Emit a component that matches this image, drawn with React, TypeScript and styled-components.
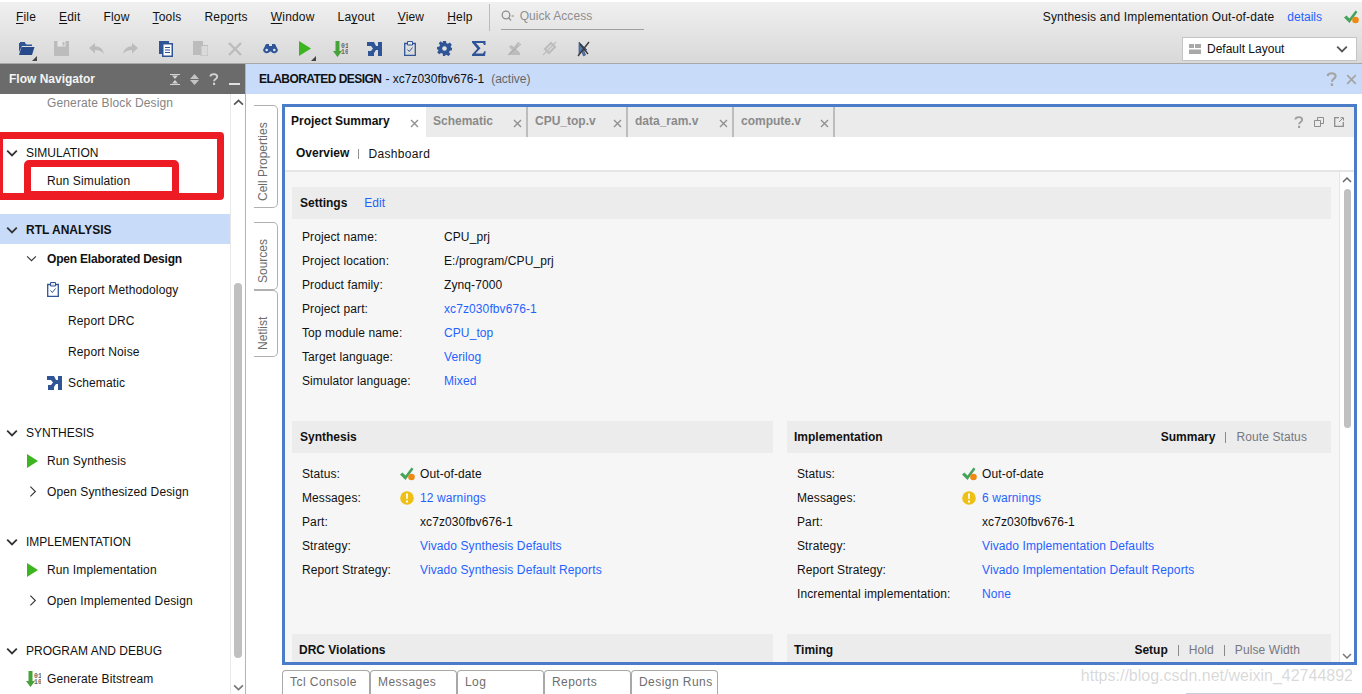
import { ReactNode } from "react";
import styled, { createGlobalStyle } from "styled-components";

const GlobalStyle = createGlobalStyle`
  html, body {
    margin: 0;
    padding: 0;
    background: #ffffff;
    overflow: hidden;
  }
  body {
    font-family: "Liberation Sans", Arial, sans-serif;
    font-size: 12px;
    color: #111111;
  }
  * {
    box-sizing: border-box;
  }
`;

const Page = styled.div`
  position: relative;
  width: 1362px;
  height: 694px;
  overflow: hidden;
  display: flex;
  flex-direction: column;
`;

/* top chrome */

const Chrome = styled.div`
  height: 62px;
  margin-top: 2px;
  flex: none;
  display: flex;
  flex-direction: column;
  background: linear-gradient(#f0f0f0, #d8d8d8);
  border-bottom: 1px solid #a8a8a8;
`;

const MenuRow = styled.div`
  height: 30px;
  flex: none;
  display: flex;
  align-items: center;
  padding-left: 16px;
`;

const MenuItem = styled.span`
  margin-right: 23px;
  letter-spacing: 0.18px;
  u {
    text-decoration-thickness: 1px;
    text-underline-offset: 2px;
  }
`;

const MenuDivider = styled.div`
  width: 1px;
  height: 27px;
  margin-left: -7px;
  background: #bcbcbc;
`;

const QuickAccess = styled.div`
  width: 143px;
  height: 25px;
  margin-left: 11px;
  padding-bottom: 2px;
  display: flex;
  align-items: center;
  gap: 5px;
  color: #8e8e8e;
  border-bottom: 1px solid #a0a0a0;
  letter-spacing: 0.05px;
`;

const StatusText = styled.span`
  margin-left: auto;
  letter-spacing: 0.17px;
`;

const StatusLink = styled.span`
  margin-left: 13px;
  margin-right: 22px;
  color: #1f63ff;
`;

const StatusIcon = styled.div`
  width: 15px;
  height: 14px;
  margin-right: 3px;
  display: flex;
`;

const ToolRow = styled.div`
  flex: 1;
  display: flex;
  align-items: center;
  padding: 2px 0 0 9px;
`;

const ToolSlot = styled.div`
  position: relative;
  width: 34.85px;
  height: 24px;
  display: flex;
  align-items: center;
  justify-content: center;
  flex: none;
`;

const Corner = styled.div`
  position: absolute;
  right: 7px;
  bottom: 0;
  width: 0;
  height: 0;
  border-left: 5px solid transparent;
  border-bottom: 5px solid #444444;
`;

const LayoutSelect = styled.div`
  margin-left: auto;
  margin-right: 5px;
  width: 175px;
  height: 24px;
  display: flex;
  align-items: center;
  padding: 0 8px 0 6px;
  gap: 6px;
  background: #ffffff;
  border: 1px solid #c4c4c4;
`;

const LayoutName = styled.span`
  flex: 1;
`;

/* body */

const Body = styled.div`
  flex: 1;
  min-height: 0;
  display: flex;
`;

const NavColumn = styled.div`
  width: 246px;
  flex: none;
  display: flex;
  flex-direction: column;
  border-right: 1px solid #b4b4b4;
`;

const NavHeader = styled.div`
  height: 30px;
  flex: none;
  display: flex;
  align-items: center;
  gap: 10px;
  padding: 0 5px 0 9px;
  background: #6b6b6b;
  color: #f4f4f4;
  font-weight: bold;
`;

const NavTitle = styled.span`
  flex: 1;
`;

const NavBody = styled.div`
  flex: 1;
  min-height: 0;
  display: flex;
`;

const NavList = styled.div`
  width: 231px;
  flex: none;
  overflow: hidden;
  border-right: 1px solid #e8e8e8;
`;

const NavScroll = styled.div`
  flex: 1;
  display: flex;
  flex-direction: column;
  align-items: center;
  padding: 3px 0 1px;
`;

const NavThumb = styled.div`
  width: 8px;
  height: 375px;
  margin-top: 175px;
  margin-bottom: auto;
  border-radius: 4px;
  background: #c0c0c0;
`;

const NavSection = styled.div<{ $gap: number }>`
  margin-top: ${(p) => p.$gap}px;
`;

const SectionRow = styled.div<{ $active?: boolean }>`
  height: 30px;
  display: flex;
  align-items: center;
  padding: 2px 0 0 6px;
  gap: 8px;
  background: ${(p) => (p.$active ? "#c8dcfa" : "transparent")};
  font-weight: ${(p) => (p.$active ? "bold" : "normal")};
`;

const SectionItems = styled.div<{ $lift: number }>`
  margin-top: -${(p) => p.$lift}px;
`;

const NavRow = styled.div<{ $indent: number; $bold?: boolean; $dim?: boolean; $h?: number }>`
  height: ${(p) => p.$h ?? 31}px;
  display: flex;
  align-items: center;
  padding-left: ${(p) => p.$indent}px;
  font-weight: ${(p) => (p.$bold ? "bold" : "normal")};
  color: ${(p) => (p.$dim ? "#858585" : "#111111")};
  letter-spacing: ${(p) => (p.$bold ? "-0.2px" : "0.13px")};
`;

const NavIconSlot = styled.div<{ $w: number }>`
  width: ${(p) => p.$w}px;
  height: 16px;
  flex: none;
  display: flex;
  align-items: center;
`;

const Workspace = styled.div`
  flex: 1;
  min-width: 0;
  display: flex;
  flex-direction: column;
`;

const Banner = styled.div`
  height: 30px;
  flex: none;
  display: flex;
  align-items: center;
  padding: 0 5px 0 13px;
  gap: 4px;
  background: #c8dcfa;
`;

const BannerTitle = styled.span`
  font-weight: bold;
  letter-spacing: -0.55px;
`;

const BannerMuted = styled.span`
  margin-left: 3px;
  color: #666666;
  flex: 1;
`;

const BannerIcons = styled.div`
  display: flex;
  align-items: center;
  gap: 9px;
`;

const WorkRow = styled.div`
  flex: 1;
  min-height: 0;
  display: flex;
`;

const Rail = styled.div`
  width: 36px;
  flex: none;
  padding: 11px 0 0 8px;
  display: flex;
  flex-direction: column;
`;

const RailTab = styled.div<{ $h: number; $gap?: number }>`
  width: 24px;
  height: ${(p) => p.$h}px;
  margin-top: ${(p) => p.$gap ?? 0}px;
  padding: 6px 0 0 5px;
  display: flex;
  align-items: center;
  justify-content: flex-start;
  writing-mode: vertical-rl;
  transform: rotate(180deg);
  color: #6c6c6c;
  border: 1px solid #b0b0b0;
  border-right: none;
  border-radius: 5px 0 0 5px;
`;

const MainColumn = styled.div`
  flex: 1;
  min-width: 0;
  padding: 10px 5px 0 0;
  display: flex;
  flex-direction: column;
`;

const Panel = styled.div`
  height: 561px;
  flex: none;
  display: flex;
  flex-direction: column;
  border: 3px solid #4a7cc9;
`;

const TabStrip = styled.div`
  height: 30px;
  flex: none;
  display: flex;
  background: #ebebeb;
`;

const DocTab = styled.div<{ $w: number; $active?: boolean }>`
  width: ${(p) => p.$w}px;
  display: flex;
  justify-content: space-between;
  padding: 7px ${(p) => (p.$active ? 7 : 4)}px 0 ${(p) => (p.$active ? 6 : 7)}px;
  flex: none;
  font-weight: bold;
  color: ${(p) => (p.$active ? "#111111" : "#8a8a8a")};
  background: ${(p) => (p.$active ? "#ffffff" : "transparent")};
  border-right: ${(p) => (p.$active ? "none" : "2px solid #bdbdbd")};
`;

const TabClose = styled.div`
  margin-top: 5px;
  display: flex;
`;

const StripIcons = styled.div`
  margin-left: auto;
  display: flex;
  align-items: center;
  gap: 10px;
  padding-right: 10px;
`;

const SubTabs = styled.div`
  height: 35px;
  flex: none;
  display: flex;
  align-items: center;
  padding-left: 11px;
  background: #ffffff;
  border-bottom: 2px solid #e6e6e6;
`;

const SubTabOn = styled.span`
  font-weight: bold;
  margin-top: -2px;
`;

const SubTabSep = styled.div`
  width: 1px;
  height: 10px;
  margin: 0 9px;
  background: #909090;
`;

const SubTabOff = styled.span`
  margin-top: 1px;
  letter-spacing: 0.35px;
`;

const ScrollArea = styled.div`
  flex: 1;
  min-height: 0;
  display: flex;
`;

const Content = styled.div`
  flex: 1;
  min-width: 0;
  overflow: hidden;
  padding: 15px 8px 0 7px;
  background: #f6f6f6;
`;

const PanelScroll = styled.div`
  width: 15px;
  flex: none;
  display: flex;
  flex-direction: column;
  align-items: center;
  padding: 3px 0 1px;
  background: #ffffff;
  border-left: 1px solid #e6e6e6;
`;

const PanelThumb = styled.div`
  width: 7px;
  height: 239px;
  margin-top: 4px;
  margin-bottom: auto;
  border-radius: 4px;
  background: #c0c0c0;
`;

const SectionHead = styled.div<{ $left?: number; $right?: number }>`
  height: 32px;
  display: flex;
  align-items: center;
  padding: 0 ${(p) => p.$right ?? 24}px 0 ${(p) => p.$left ?? 8}px;
  background: #ececec;
  font-weight: bold;
`;

const HeadLink = styled.span`
  margin-left: 17px;
  font-weight: normal;
  color: #1f63ff;
`;

const HeadTabs = styled.div`
  margin-left: auto;
  display: flex;
  align-items: center;
`;

const HeadTabMuted = styled.span`
  font-weight: normal;
  color: #77777f;
  letter-spacing: 0.1px;
`;

const HeadSep = styled.div`
  width: 1px;
  height: 11px;
  margin: 0 10px;
  background: #8a8a8a;
`;

const InfoGrid = styled.div<{ $label: number; $pad: number }>`
  display: grid;
  grid-template-columns: ${(p) => p.$label}px 1fr;
  grid-auto-rows: 24px;
  align-items: center;
  padding: ${(p) => p.$pad}px 0 0 10px;
  letter-spacing: 0.1px;
`;

const Columns = styled.div`
  display: grid;
  grid-template-columns: 481px 544px;
  column-gap: 14px;
`;

const Block = styled.div<{ $h: number }>`
  height: ${(p) => p.$h}px;
`;

const InfoValue = styled.span<{ $link?: boolean }>`
  display: flex;
  align-items: center;
  color: ${(p) => (p.$link ? "#1f63ff" : "#111111")};
`;

const StateIcon = styled.span<{ $w: number }>`
  width: ${(p) => p.$w}px;
  margin-left: -20px;
  flex: none;
  display: flex;
`;

/* bottom tabs */

const BottomTabs = styled.div`
  flex: 1;
  margin-top: 5px;
  display: flex;
  align-items: flex-start;
`;

const BottomTab = styled.div`
  width: 87px;
  height: 26px;
  padding: 4px 0 0 7px;
  color: #6e6e6e;
  letter-spacing: 0.45px;
  border: 1px solid #a8a8a8;
  border-bottom: none;
  border-radius: 4px 4px 0 0;
  background: #ffffff;
  &:first-child {
    width: 88px;
  }
`;

/* overlays */

const RedBox = styled.div`
  position: absolute;
  left: -4px;
  top: 132px;
  width: 228px;
  height: 68px;
  border: 7px solid #ed1c24;
  border-radius: 4px;
  pointer-events: none;
`;

const RedInner = styled.div`
  position: absolute;
  left: 24px;
  top: 160px;
  width: 155px;
  height: 38px;
  border: 7px solid #ed1c24;
  border-radius: 5px 5px 0 0;
  pointer-events: none;
`;

const Watermark = styled.div`
  position: absolute;
  right: 9px;
  bottom: 9px;
  font-size: 16px;
  color: rgba(170, 170, 170, 0.45);
  white-space: nowrap;
`;

const BottomEdge = styled.div`
  position: absolute;
  left: 1186px;
  right: 0;
  bottom: 0;
  height: 1px;
  background: #c8d0e0;
`;

/* drawings */

const NAVY = "#2f5597";
const GHOST = "#bcbcbc";

function FolderIcon() {
  return (
    <svg width="17" height="15" viewBox="0 0 17 15">
      <path d="M1 2h6l1.500 1.500H14V5H4L1 11z" fill={NAVY} />
      <path d="M3.500 6H16.500L14 14H1z" fill="#264a8c" />
      <path d="M2 1h5v1H2z" fill={NAVY} />
    </svg>
  );
}

function SaveIcon() {
  return (
    <svg width="15" height="15" viewBox="0 0 15 15">
      <path d="M0 0h15v15H0z" fill={GHOST} />
      <path d="M3.500 0h8v5.500h-8z" fill="#e6e6e6" />
      <path d="M8.500 1h2v3.500h-2z" fill={GHOST} />
    </svg>
  );
}

function UndoIcon({ flip }: { flip?: boolean }) {
  return (
    <svg width="15" height="12" viewBox="0 0 15 12" style={{ transform: flip ? "scaleX(-1)" : undefined }}>
      <path d="M0 5 6 0v3.200C11 3.200 14 6 15 11 12.500 8 10 7 6 7v3.500z" fill={GHOST} />
    </svg>
  );
}

function DocIcon() {
  return (
    <svg width="14" height="16" viewBox="0 0 14 16">
      <path d="M0 0h10v13H0z" fill={NAVY} />
      <path d="M3 2h11v14H3z" fill={NAVY} />
      <path d="M4.500 3.500h8v11h-8z" fill="#ffffff" />
      <path d="M6 6h5v1H6zM6 8.500h5v1H6zM6 11h5v1H6z" fill={NAVY} />
    </svg>
  );
}

function CopyIcon() {
  return (
    <svg width="15" height="15" viewBox="0 0 15 15">
      <path d="M0 0h10v14H0z" fill={GHOST} />
      <path d="M8 4.500h7V15H8z" fill="#dadada" stroke={GHOST} />
    </svg>
  );
}

function CrossIcon() {
  return (
    <svg width="14" height="14" viewBox="0 0 14 14">
      <path d="M1 1l12 12M13 1 1 13" stroke={GHOST} strokeWidth="2.400" fill="none" />
    </svg>
  );
}

function BinocularsIcon() {
  return (
    <svg width="15" height="11" viewBox="0 0 15 11">
      <path d="M3 1h3v2h3V1h3l3 6a3.800 3.800 0 0 1-7 1.500H7A3.800 3.800 0 0 1 0 7z" fill={NAVY} />
      <circle cx="3.700" cy="7" r="1.300" fill="#dfe6f2" />
      <circle cx="11.300" cy="7" r="1.300" fill="#dfe6f2" />
    </svg>
  );
}

function PlayIcon({ w, h }: { w: number; h: number }) {
  return (
    <svg width={w} height={h} viewBox="0 0 12 14" preserveAspectRatio="none">
      <path d="M0 0 12 7 0 14z" fill="#3cb521" />
    </svg>
  );
}

function BitstreamIcon() {
  return (
    <svg width="15" height="16" viewBox="0 0 15 16">
      <path d="M2.500 0h4v10h2.500l-4.500 6L0 10h2.500z" fill="#46a33a" />
      <text x="8" y="6.500" fontSize="6.500" fontFamily="Liberation Mono" fontWeight="bold" fill="#666666">01</text>
      <text x="8" y="13" fontSize="6.500" fontFamily="Liberation Mono" fontWeight="bold" fill="#666666">10</text>
    </svg>
  );
}

function SchematicIcon() {
  return (
    <svg width="15" height="14" viewBox="0 0 15 14">
      <path d="M0 0h7l2 4h2V0h4v14h-4V8H9l-2 3v3H1V9h3l2-2.500L4 4H0z" fill={NAVY} />
    </svg>
  );
}

function ClipboardIcon() {
  return (
    <svg width="12" height="15" viewBox="0 0 12 15">
      <path d="M.7 2.500h10.600v11.800H.7z" fill="none" stroke={NAVY} strokeWidth="1.300" />
      <path d="M3.500.5h5v3.500h-5z" fill="#e8e8e8" stroke={NAVY} />
      <path d="M3.500 8.500 5.300 10.500 8.500 6.500" fill="none" stroke={NAVY} />
    </svg>
  );
}

function GearIcon() {
  return (
    <svg width="15" height="15" viewBox="0 0 15 15">
      <path
        d="M6 0h3l.4 2.200 1.500.6L12.800 1.600l2 2.100-1.200 1.800.7 1.500L15 6.500v2.800l-2.300.4-.6 1.500 1.300 1.900-2 2-1.900-1.300-1.500.6L8 15H6l-.4-2.400-1.500-.6-1.900 1.300-2-2 1.300-1.900-.6-1.500L0 9V6l2.400-.4.600-1.500-1.300-1.900 2-2L5.500 2z"
        fill={NAVY}
      />
      <circle cx="7.500" cy="7.500" r="2.300" fill="#e2e2e2" />
    </svg>
  );
}

function SigmaIcon() {
  return (
    <svg width="14" height="15" viewBox="0 0 14 15">
      <path d="M0 0h13.500v4h-1.500L11 2H4l4.500 5.300L3.500 12.500H11l1.200-2.200h1.500L13 15H0v-1.500L5.300 7.800 0 1.500z" fill={NAVY} />
    </svg>
  );
}

function CheckedOutIcon() {
  return (
    <svg width="15" height="15" viewBox="0 0 15 15">
      <path d="M2 14h11V12L9 8 13 2l-2-1-4 5-3-2L2 6l3 3-3 3z" fill={GHOST} />
      <path d="M1 14 14 3" stroke="#a8a8a8" />
    </svg>
  );
}

function PinIcon() {
  return (
    <svg width="15" height="15" viewBox="0 0 15 15">
      <path d="M3 8 9 2l4 4-6 6z" fill="none" stroke={GHOST} strokeWidth="2" />
      <path d="M1 14 14 1" stroke={GHOST} strokeWidth="1.300" />
    </svg>
  );
}

function CursorCrossIcon() {
  return (
    <svg width="15" height="16" viewBox="0 0 15 16">
      <path d="M3 1 11 9H7.500L9.500 14 7.500 15 5.500 10 3 12.500z" fill="#4f78bd" stroke="#2a3f66" strokeWidth=".6" />
      <path d="M2 15 13 1M4 3l8 10" stroke="#3a3a3a" strokeWidth="1.400" />
    </svg>
  );
}

function StatusCheck() {
  return (
    <svg width="15" height="14" viewBox="0 0 15 14">
      <path d="M0 7.500 2.500 5.500 5.500 8.500 11.500 0.500 13.500 2 5.500 13z" fill="#46a35a" />
      <circle cx="11.500" cy="10" r="3.300" fill="#ee8a12" />
    </svg>
  );
}

function WarningIcon() {
  return (
    <svg width="14" height="14" viewBox="0 0 14 14">
      <circle cx="7" cy="7" r="6.800" fill="#eebf14" />
      <path d="M6 2.500h2l-.3 5.500H6.300zM6 9.500h2v2H6z" fill="#ffffff" />
    </svg>
  );
}

function Chevron({ dir, color = "#333333", size = 9 }: { dir: "down" | "right" | "up"; color?: string; size?: number }) {
  const d = dir === "down" ? "M1 3l4 4 4-4" : dir === "up" ? "M1 7l4-4 4 4" : "M3 1l4 4-4 4";
  return (
    <svg width={size} height={size} viewBox="0 0 10 10">
      <path d={d} fill="none" stroke={color} strokeWidth="1.500" />
    </svg>
  );
}

function ThinChevron({ dir }: { dir: "down" | "right" }) {
  const d = dir === "down" ? "M1 3l4 4 4-4" : "M4 .5l4.500 4.500-4.500 4.500";
  return (
    <svg width="11" height="11" viewBox="0 0 10 10">
      <path d={d} fill="none" stroke="#333333" strokeWidth="1" />
    </svg>
  );
}

function SmallCross({ color = "#8f8f8f", size = 9 }: { color?: string; size?: number }) {
  return (
    <svg width={size} height={size} viewBox="0 0 9 9">
      <path d="M1 1l7 7M8 1 1 8" stroke={color} strokeWidth="1.400" fill="none" />
    </svg>
  );
}

function Question({ color, size = 13 }: { color: string; size?: number }) {
  return (
    <svg width={size * 0.8} height={size} viewBox="0 0 10 13">
      <path d="M1.300 3.800C1.500 1.800 3 1.200 5 1.200c2.300 0 3.700 1 3.700 2.800 0 2.500-3.400 2.300-3.400 5" fill="none" stroke={color} strokeWidth="2" />
      <path d="M4.200 10.500h2.200V13H4.200z" fill={color} />
    </svg>
  );
}

function RestoreIcon() {
  return (
    <svg width="10" height="10" viewBox="0 0 10 10">
      <path d="M3.500 3V.5h6v6H7M.5 3.500h6v6h-6z" fill="none" stroke="#8e8e8e" />
    </svg>
  );
}

function MaximizeIcon() {
  return (
    <svg width="10" height="10" viewBox="0 0 10 10">
      <path d="M5 .7H.7v8.600h8.600V5" fill="none" stroke="#8e8e8e" strokeWidth="1.300" />
      <path d="M5 5 9 1M6.500 .7h3v3" fill="none" stroke="#8e8e8e" />
    </svg>
  );
}

function LayoutGlyph() {
  return (
    <svg width="12" height="10" viewBox="0 0 12 10">
      <path d="M0 0h5v4H0zM6 0h6v4H6zM0 5.500h12V10H0z" fill="#a8a8a8" />
    </svg>
  );
}

function CollapseGlyph() {
  return (
    <svg width="10" height="11" viewBox="0 0 10 11">
      <path d="M0 0h10v1H0zM0 10h10v1H0zM2 1.500h6L5 5zM2 9.500h6L5 6z" fill="#d4d4d4" />
    </svg>
  );
}

function SortGlyph() {
  return (
    <svg width="9" height="11" viewBox="0 0 9 11">
      <path d="M4.500 0 9 5H0zM4.500 11 9 6H0z" fill="#c4c4c4" />
    </svg>
  );
}

function MinimizeGlyph() {
  return (
    <svg width="11" height="11" viewBox="0 0 11 11">
      <path d="M0 9h11v2H0z" fill="#e0e0e0" />
    </svg>
  );
}

function SearchGlyph() {
  return (
    <svg width="14" height="12" viewBox="0 0 14 12">
      <circle cx="5" cy="5" r="3.800" fill="none" stroke="#8e8e8e" strokeWidth="1.300" />
      <path d="M7.500 7.500 10 10.500M10.500 6H13" stroke="#8e8e8e" strokeWidth="1.200" />
    </svg>
  );
}

/* data */

const MENUS: [string, string][] = [
  ["F", "ile"],
  ["E", "dit"],
  ["", "Fl|ow"],
  ["T", "ools"],
  ["", "Rep|orts"],
  ["W", "indow"],
  ["", "La|yout"],
  ["V", "iew"],
  ["H", "elp"],
];

const TOOLS: { icon: ReactNode; more?: boolean }[] = [
  { icon: <FolderIcon />, more: true },
  { icon: <SaveIcon /> },
  { icon: <UndoIcon /> },
  { icon: <UndoIcon flip /> },
  { icon: <DocIcon /> },
  { icon: <CopyIcon /> },
  { icon: <CrossIcon /> },
  { icon: <BinocularsIcon /> },
  { icon: <PlayIcon w={12} h={15} />, more: true },
  { icon: <BitstreamIcon /> },
  { icon: <SchematicIcon /> },
  { icon: <ClipboardIcon /> },
  { icon: <GearIcon /> },
  { icon: <SigmaIcon /> },
  { icon: <CheckedOutIcon /> },
  { icon: <PinIcon /> },
  { icon: <CursorCrossIcon /> },
];

interface INavItem {
  label: string;
  indent: number;
  slot?: number;
  icon?: ReactNode;
  bold?: boolean;
}

const NAV: { title: string; gap: number; lift: number; active?: boolean; items: INavItem[] }[] = [
  {
    title: "SIMULATION",
    gap: 25,
    lift: 2,
    items: [{ label: "Run Simulation", indent: 47 }],
  },
  {
    title: "RTL ANALYSIS",
    gap: 18,
    lift: 1,
    active: true,
    items: [
      { label: "Open Elaborated Design", indent: 26, slot: 21, icon: <ThinChevron dir="down" />, bold: true },
      { label: "Report Methodology", indent: 47, slot: 21, icon: <ClipboardIcon /> },
      { label: "Report DRC", indent: 68 },
      { label: "Report Noise", indent: 68 },
      { label: "Schematic", indent: 47, slot: 21, icon: <SchematicIcon /> },
    ],
  },
  {
    title: "SYNTHESIS",
    gap: 19,
    lift: 2,
    items: [
      { label: "Run Synthesis", indent: 27, slot: 20, icon: <PlayIcon w={11} h={14} /> },
      { label: "Open Synthesized Design", indent: 26, slot: 21, icon: <ThinChevron dir="right" /> },
    ],
  },
  {
    title: "IMPLEMENTATION",
    gap: 19,
    lift: 2,
    items: [
      { label: "Run Implementation", indent: 27, slot: 20, icon: <PlayIcon w={11} h={14} /> },
      { label: "Open Implemented Design", indent: 26, slot: 21, icon: <ThinChevron dir="right" /> },
    ],
  },
  {
    title: "PROGRAM AND DEBUG",
    gap: 19,
    lift: 2,
    items: [{ label: "Generate Bitstream", indent: 26, slot: 21, icon: <BitstreamIcon /> }],
  },
];

const DOC_TABS = [
  { label: "Project Summary", w: 141, active: true },
  { label: "Schematic", w: 102 },
  { label: "CPU_top.v", w: 100 },
  { label: "data_ram.v", w: 106 },
  { label: "compute.v", w: 101 },
];

const SETTINGS: [string, string, boolean?][] = [
  ["Project name:", "CPU_prj"],
  ["Project location:", "E:/program/CPU_prj"],
  ["Product family:", "Zynq-7000"],
  ["Project part:", "xc7z030fbv676-1", true],
  ["Top module name:", "CPU_top", true],
  ["Target language:", "Verilog", true],
  ["Simulator language:", "Mixed", true],
];

function statusRows(warnings: string, strategy: string, report: string): { label: string; value: string; link?: boolean; icon?: ReactNode }[] {
  return [
    { label: "Status:", value: "Out-of-date", icon: <StatusCheck /> },
    { label: "Messages:", value: warnings, link: true, icon: <WarningIcon /> },
    { label: "Part:", value: "xc7z030fbv676-1" },
    { label: "Strategy:", value: strategy, link: true },
    { label: "Report Strategy:", value: report, link: true },
  ];
}

const SYNTH_ROWS = statusRows("12 warnings", "Vivado Synthesis Defaults", "Vivado Synthesis Default Reports");
const IMPL_ROWS = [
  ...statusRows("6 warnings", "Vivado Implementation Defaults", "Vivado Implementation Default Reports"),
  { label: "Incremental implementation:", value: "None", link: true },
];

function MenuLabel({ head, rest }: { head: string; rest: string }) {
  if (head) {
    return (
      <>
        <u>{head}</u>
        {rest}
      </>
    );
  }
  const [before, after] = rest.split("|");
  return (
    <>
      {before}
      <u>{after[0]}</u>
      {after.slice(1)}
    </>
  );
}

function StatusGrid({ label, rows }: { label: number; rows: typeof IMPL_ROWS }) {
  return (
    <InfoGrid $label={label} $pad={9}>
      {rows.map((row) => (
        <div key={row.label} style={{ display: "contents" }}>
          <span>{row.label}</span>
          <InfoValue $link={row.link}>
            {row.icon && <StateIcon $w={20}>{row.icon}</StateIcon>}
            {row.value}
          </InfoValue>
        </div>
      ))}
    </InfoGrid>
  );
}

export default function App() {
  return (
    <Page>
      <GlobalStyle />
      <Chrome>
        <MenuRow>
          {MENUS.map(([head, rest]) => (
            <MenuItem key={head + rest}>
              <MenuLabel head={head} rest={rest} />
            </MenuItem>
          ))}
          <MenuDivider />
          <QuickAccess>
            <SearchGlyph />
            Quick Access
          </QuickAccess>
          <StatusText>Synthesis and Implementation Out-of-date</StatusText>
          <StatusLink>details</StatusLink>
          <StatusIcon>
            <StatusCheck />
          </StatusIcon>
        </MenuRow>
        <ToolRow>
          {TOOLS.map((tool, i) => (
            <ToolSlot key={i}>
              {tool.icon}
              {tool.more && <Corner />}
            </ToolSlot>
          ))}
          <LayoutSelect>
            <LayoutGlyph />
            <LayoutName>Default Layout</LayoutName>
            <Chevron dir="down" color="#555555" size={12} />
          </LayoutSelect>
        </ToolRow>
      </Chrome>
      <Body>
        <NavColumn>
          <NavHeader>
            <NavTitle>Flow Navigator</NavTitle>
            <CollapseGlyph />
            <SortGlyph />
            <Question color="#d4d4d4" size={12} />
            <MinimizeGlyph />
          </NavHeader>
          <NavBody>
            <NavList>
              <NavRow $indent={47} $dim $h={18}>
                Generate Block Design
              </NavRow>
              {NAV.map((section) => (
                <NavSection key={section.title} $gap={section.gap}>
                  <SectionRow $active={section.active}>
                    <Chevron dir="down" size={12} />
                    {section.title}
                  </SectionRow>
                  <SectionItems $lift={section.lift}>
                    {section.items.map((item) => (
                      <NavRow key={item.label} $indent={item.indent} $bold={item.bold}>
                        {item.icon && <NavIconSlot $w={item.slot ?? 21}>{item.icon}</NavIconSlot>}
                        {item.label}
                      </NavRow>
                    ))}
                  </SectionItems>
                </NavSection>
              ))}
            </NavList>
            <NavScroll>
              <Chevron dir="up" color="#555555" size={11} />
              <NavThumb />
              <Chevron dir="down" color="#777777" size={11} />
            </NavScroll>
          </NavBody>
        </NavColumn>
        <Workspace>
          <Banner>
            <BannerTitle>ELABORATED DESIGN</BannerTitle>- xc7z030fbv676-1
            <BannerMuted>(active)</BannerMuted>
            <BannerIcons>
              <Question color="#a4a4a4" size={14} />
              <SmallCross color="#a4a4a4" size={11} />
            </BannerIcons>
          </Banner>
          <WorkRow>
            <Rail>
              <RailTab $h={103}>Cell Properties</RailTab>
              <RailTab $h={68} $gap={14}>Sources</RailTab>
              <RailTab $h={67}>Netlist</RailTab>
            </Rail>
            <MainColumn>
              <Panel>
                <TabStrip>
                  {DOC_TABS.map((tab) => (
                    <DocTab key={tab.label} $w={tab.w} $active={tab.active}>
                      {tab.label}
                      <TabClose>
                        <SmallCross />
                      </TabClose>
                    </DocTab>
                  ))}
                  <StripIcons>
                    <Question color="#9e9e9e" size={12} />
                    <RestoreIcon />
                    <MaximizeIcon />
                  </StripIcons>
                </TabStrip>
                <SubTabs>
                  <SubTabOn>Overview</SubTabOn>
                  <SubTabSep />
                  <SubTabOff>Dashboard</SubTabOff>
                </SubTabs>
                <ScrollArea>
                  <Content>
                    <Block $h={234}>
                      <SectionHead>
                        Settings
                        <HeadLink>Edit</HeadLink>
                      </SectionHead>
                      <InfoGrid $label={142} $pad={6}>
                        {SETTINGS.map(([label, value, link]) => (
                          <div key={label} style={{ display: "contents" }}>
                            <span>{label}</span>
                            <InfoValue $link={link}>{value}</InfoValue>
                          </div>
                        ))}
                      </InfoGrid>
                    </Block>
                    <Columns>
                      <Block $h={213}>
                        <SectionHead>Synthesis</SectionHead>
                        <StatusGrid label={118} rows={SYNTH_ROWS} />
                      </Block>
                      <Block $h={213}>
                        <SectionHead $left={7}>
                          Implementation
                          <HeadTabs>
                            Summary
                            <HeadSep />
                            <HeadTabMuted>Route Status</HeadTabMuted>
                          </HeadTabs>
                        </SectionHead>
                        <StatusGrid label={185} rows={IMPL_ROWS} />
                      </Block>
                      <Block $h={32}>
                        <SectionHead $left={7}>DRC Violations</SectionHead>
                      </Block>
                      <Block $h={32}>
                        <SectionHead $left={7} $right={31}>
                          Timing
                          <HeadTabs>
                            Setup
                            <HeadSep />
                            <HeadTabMuted>Hold</HeadTabMuted>
                            <HeadSep />
                            <HeadTabMuted>Pulse Width</HeadTabMuted>
                          </HeadTabs>
                        </SectionHead>
                      </Block>
                    </Columns>
                  </Content>
                  <PanelScroll>
                    <Chevron dir="up" color="#666666" size={10} />
                    <PanelThumb />
                    <Chevron dir="down" color="#777777" size={10} />
                  </PanelScroll>
                </ScrollArea>
              </Panel>
              <BottomTabs>
                {["Tcl Console", "Messages", "Log", "Reports", "Design Runs"].map((name) => (
                  <BottomTab key={name}>{name}</BottomTab>
                ))}
              </BottomTabs>
            </MainColumn>
          </WorkRow>
        </Workspace>
      </Body>
      <RedBox />
      <RedInner />
      <Watermark>https://blog.csdn.net/weixin_42744892</Watermark>
      <BottomEdge />
    </Page>
  );
}
